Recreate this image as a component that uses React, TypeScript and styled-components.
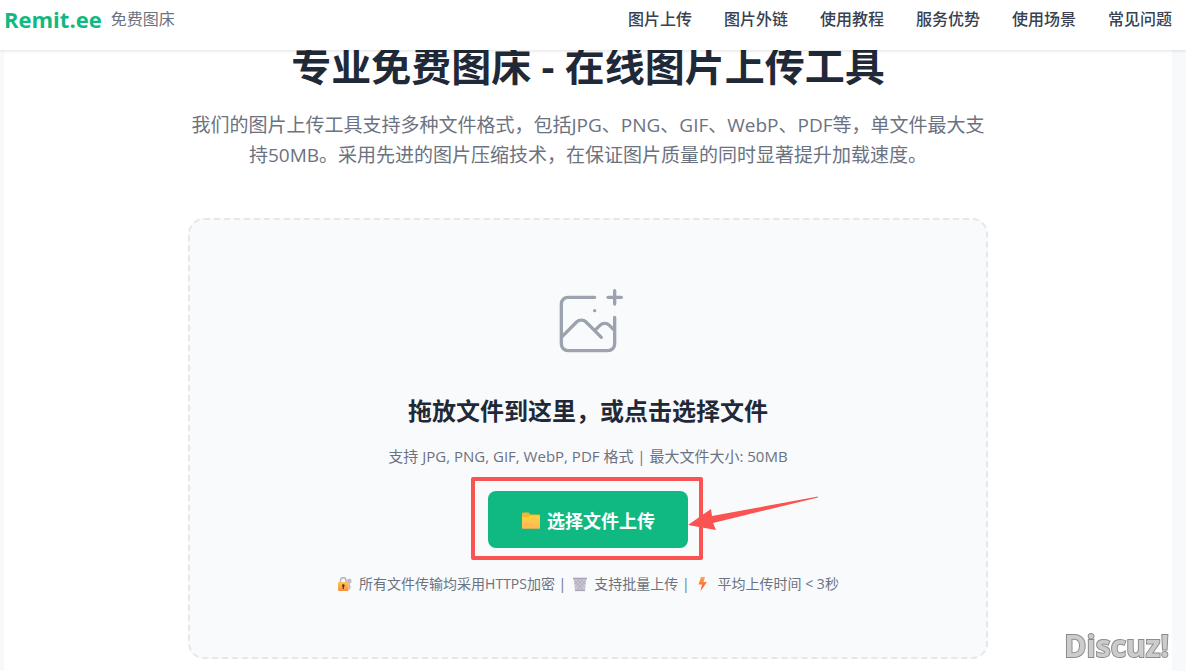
import React from "react";
import styled, { createGlobalStyle } from "styled-components";

const GlobalStyle = createGlobalStyle`
  *, *::before, *::after { box-sizing: border-box; }
  body {
    margin: 0;
    background: #f7f9fb;
    color: #1f2937;
    font-family: "Open Sans", "Noto Sans CJK SC", sans-serif;
  }
  h1, h2, p { margin: 0; }
`;

const Header = styled.header`
  position: sticky;
  top: 0;
  z-index: 2;
  display: flex;
  align-items: flex-start;
  justify-content: space-between;
  height: 50px;
  padding: 4px 14px 0 4px;
  background: #ffffff;
  box-shadow: 0 1px 3px rgba(0, 0, 0, 0.12);
`;

const Brand = styled.a`
  display: flex;
  align-items: center;
  gap: 9px;
  color: #10b981;
  font-size: 22px;
  font-weight: 700;
  line-height: 30px;
  text-decoration: none;
`;

const Tagline = styled.span`
  color: #6b7280;
  font-size: 16px;
  font-weight: 400;
`;

const Nav = styled.nav`
  display: flex;
  gap: 32px;
`;

const NavLink = styled.a`
  color: #374151;
  font-size: 16px;
  font-weight: 500;
  line-height: 30px;
  text-decoration: none;
`;

const Main = styled.main`
  display: flex;
  flex-direction: column;
  align-items: center;
  margin: -8px 14px 0 4px;
  padding-bottom: 12px;
  background: #ffffff;
`;

const Title = styled.h1`
  font-size: 40px;
  font-weight: 700;
  line-height: 48px;
  text-align: center;
`;

const Intro = styled.p`
  width: 100%;
  max-width: 800px;
  margin: 20px 0 48px;
  color: #6b7280;
  font-size: 19px;
  line-height: 30px;
  text-align: center;
`;

const DropZone = styled.section`
  display: flex;
  flex-direction: column;
  align-items: center;
  width: 100%;
  max-width: 800px;
  padding: 64px 16px 62px;
  border: 2px dashed #e5e7eb;
  border-radius: 16px;
  background: #f9fafc;
  text-align: center;
`;

const DropIcon = styled.svg`
  width: 80px;
  height: 80px;
  color: #9ca3af;
`;

const DropTitle = styled.h2`
  margin-top: 28px;
  font-size: 24px;
  font-weight: 700;
  line-height: 38px;
`;

const Hint = styled.p`
  margin-top: 14px;
  color: #6b7280;
  font-size: 15px;
  line-height: 24px;
`;

const UploadArea = styled.div`
  position: relative;
  margin: 23px 0 25px;
`;

const UploadButton = styled.button`
  display: flex;
  align-items: center;
  justify-content: center;
  gap: 6px;
  min-width: 200px;
  height: 57px;
  padding: 0 32px;
  border: 0;
  border-radius: 8px;
  background: #10b981;
  color: #ffffff;
  font: inherit;
  font-size: 18px;
  font-weight: 700;
  cursor: pointer;
`;

const Highlight = styled.span`
  position: absolute;
  inset: -14px -15px -12px -17px;
  border: 4px solid #fb5252;
  border-radius: 2px;
  pointer-events: none;
`;

const Pointer = styled.svg`
  position: absolute;
  top: 4px;
  left: 100%;
  width: 132px;
  height: 36px;
  pointer-events: none;
`;

const Notes = styled.p`
  display: flex;
  align-items: center;
  gap: 6px;
  color: #6b7280;
  font-size: 14px;
  line-height: 22px;
`;

const Emoji = styled.svg<{ $size: number }>`
  flex: none;
  width: ${(p) => p.$size}px;
  height: ${(p) => p.$size}px;
`;

const Watermark = styled.span`
  position: fixed;
  right: 17px;
  bottom: 7px;
  color: #cccccc;
  font-size: 30px;
  font-weight: 700;
  line-height: 36px;
  paint-order: stroke fill;
  -webkit-text-stroke: 2px #8c8c8c;
`;

const links = ["图片上传", "图片外链", "使用教程", "服务优势", "使用场景", "常见问题"];

function FolderIcon() {
  return (
    <Emoji $size={20} viewBox="0 0 20 20" aria-hidden="true">
      <defs>
        <linearGradient id="folder" x1="0" y1="0" x2="0" y2="1">
          <stop offset="0" stopColor="#ffd23f" />
          <stop offset="1" stopColor="#ffb556" />
        </linearGradient>
      </defs>
      <path d="M1 4a1.400 1.400 0 0 1 1.400-1.400h5l2 2h8.200A1.400 1.400 0 0 1 19 6v5H1z" fill="#f5b52e" />
      <path d="M1 7h6.500l2-1.500H19V18a.8.8 0 0 1-.8.8H1.800A.8.8 0 0 1 1 18z" fill="url(#folder)" />
    </Emoji>
  );
}

function LockIcon() {
  return (
    <Emoji $size={16} viewBox="0 0 16 16" aria-hidden="true">
      <defs>
        <linearGradient id="lock" x1="0" y1="0" x2="0" y2="1">
          <stop offset="0" stopColor="#ffc84a" />
          <stop offset="1" stopColor="#f98f3f" />
        </linearGradient>
      </defs>
      <circle cx="12.300" cy="5" r="1.300" fill="none" stroke="#c3b4d0" strokeWidth="2" />
      <path d="M12.300 7v6.500M12.300 11h1.700" stroke="#c3b4d0" strokeWidth="1.500" />
      <path d="M3.500 7V4.500a2.800 2.800 0 0 1 5.600 0V7" fill="none" stroke="#b5acbd" strokeWidth="1.400" />
      <rect x="1" y="6" width="10.500" height="9" rx="1.200" fill="url(#lock)" />
      <circle cx="6.300" cy="9.600" r="1.300" fill="#4c3041" />
      <path d="M6.300 10v3" stroke="#4c3041" strokeWidth="1.200" />
    </Emoji>
  );
}

function BasketIcon() {
  return (
    <Emoji $size={16} viewBox="0 0 16 16" aria-hidden="true">
      <path d="M1.500 2h13l-1.500 13h-10z" fill="#cbc6d3" />
      <path d="M3 5l8 9M6 4l6.500 7M9.500 4l3.500 4M13 5l-8 9M10 4l-6.500 7M6.500 4L3 8" stroke="#a49cb0" strokeWidth=".6" />
      <path d="M1 2.500h14" stroke="#aaa3b5" strokeWidth="1.600" />
      <path d="M3 14.500h10" stroke="#aaa3b5" strokeWidth="1.200" />
    </Emoji>
  );
}

function BoltIcon() {
  return (
    <Emoji $size={16} viewBox="0 0 16 16" aria-hidden="true">
      <defs>
        <linearGradient id="bolt" x1="0" y1="0" x2="0" y2="1">
          <stop offset="0" stopColor="#ffab3d" />
          <stop offset="1" stopColor="#f4433c" />
        </linearGradient>
      </defs>
      <path d="M5 1h4L7.500 6H11L4.500 15 6 8.500H2.500z" fill="url(#bolt)" />
    </Emoji>
  );
}

export default function App() {
  return (
    <>
      <GlobalStyle />
      <Header>
        <Brand href="#">
          Remit.ee <Tagline>免费图床</Tagline>
        </Brand>
        <Nav>
          {links.map((label) => (
            <NavLink href="#" key={label}>{label}</NavLink>
          ))}
        </Nav>
      </Header>
      <Main>
        <Title>专业免费图床 - 在线图片上传工具</Title>
        <Intro>
          我们的图片上传工具支持多种文件格式，包括JPG、PNG、GIF、WebP、PDF等，单文件最大支
          <br />
          持50MB。采用先进的图片压缩技术，在保证图片质量的同时显著提升加载速度。
        </Intro>
        <DropZone>
          <DropIcon viewBox="0 0 48 48" fill="none" stroke="currentColor" strokeWidth="2" strokeLinecap="round" strokeLinejoin="round" aria-hidden="true">
            <path d="M28 8H12a4 4 0 00-4 4v20m32-12v8m0 0v8a4 4 0 01-4 4H12a4 4 0 01-4-4v-4m32-4l-3.172-3.172a4 4 0 00-5.656 0L28 28M8 32l9.172-9.172a4 4 0 015.656 0L28 28m0 0l4 4m4-24h8m-4-4v8m-12 4h.02" />
          </DropIcon>
          <DropTitle>拖放文件到这里，或点击选择文件</DropTitle>
          <Hint>支持 JPG, PNG, GIF, WebP, PDF 格式 | 最大文件大小: 50MB</Hint>
          <UploadArea>
            <UploadButton type="button">
              <FolderIcon />
              选择文件上传
            </UploadButton>
            <Highlight />
            <Pointer viewBox="0 0 132 36" aria-hidden="true">
              <path d="M0 30L23 14L24 21L130 1.500L130 2.500L25 28L28 35z" fill="#fb5252" />
            </Pointer>
          </UploadArea>
          <Notes>
            <LockIcon />
            <span>所有文件传输均采用HTTPS加密 |</span>
            <BasketIcon />
            <span>支持批量上传 |</span>
            <BoltIcon />
            <span>平均上传时间 &lt; 3秒</span>
          </Notes>
        </DropZone>
      </Main>
      <Watermark>Discuz!</Watermark>
    </>
  );
}
